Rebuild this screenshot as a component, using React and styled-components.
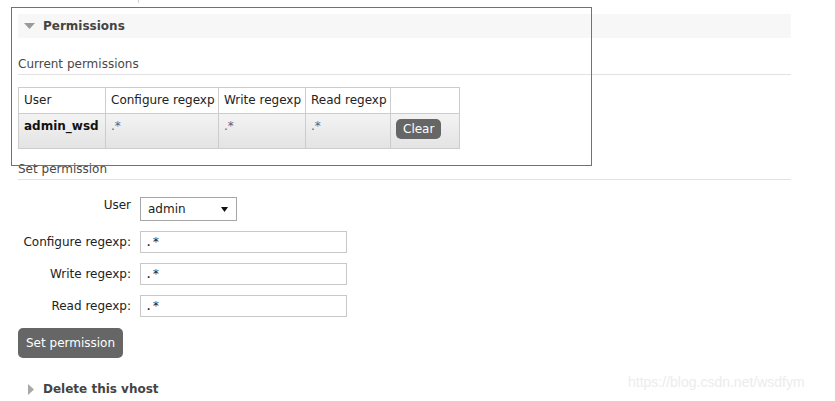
import styled, { createGlobalStyle } from 'styled-components'

const GlobalStyle = createGlobalStyle`
  body {
    margin: 0;
    background: #fff;
    font-family: "DejaVu Sans", Verdana, sans-serif;
    font-size: 12px;
    color: #333;
  }
`;

const Page = styled.div`
  position: relative;
  width: 773px;
  height: 401px;
  overflow: hidden;
  padding: 0 44px 0 18px;
`;

const TopTick = styled.div`
  margin-left: 120px;
  width: 1px;
  height: 3px;
  background: #d0d0d0;
`;

const SectionHeader = styled.div`
  display: flex;
  align-items: center;
  gap: ${p => (p.$open ? '8px' : '9px')};
  height: 24px;
  margin-top: ${p => p.$top || 0}px;
  padding-left: ${p => (p.$open ? '6px' : '10px')};
  background: ${p => (p.$open ? '#f7f7f7' : 'transparent')};
  font-weight: bold;
  line-height: 15px;
  color: #444;
`;

const SubTitle = styled.h3`
  margin: ${p => p.$top}px 0 0;
  padding-top: 1px;
  padding-bottom: 2px;
  border-bottom: 1px solid #e2e2e2;
  font-size: 12px;
  font-weight: normal;
  line-height: 15px;
  color: #484848;
`;

const Table = styled.table`
  width: 442px;
  margin-top: 12px;
  border-collapse: collapse;
  table-layout: fixed;
  line-height: 15px;

  th, td {
    border: 1px solid #cccccc;
    padding: 5px;
    text-align: left;
    vertical-align: top;
    white-space: nowrap;
  }

  tbody tr {
    background: linear-gradient(#f3f3f3, #e3e3e3);
  }
`;

const Head = styled.th`
  width: ${p => p.$w}px;
  font-weight: normal;
  color: #222;
  background: #fff;
`;

const UserCell = styled.td`
  font-weight: bold;
  color: #111;
`;

const Regexp = styled.td`
  color: #56627e;
`;

const SmallButton = styled.button`
  display: block;
  height: 20px;
  margin-bottom: 4px;
  padding: 0 7px;
  border: none;
  border-radius: 5px;
  background: #666;
  color: #fff;
  font-family: inherit;
  font-size: 12px;
  line-height: 20px;
`;

const Form = styled.div`
  display: grid;
  grid-template-columns: 122px auto;
  row-gap: 10px;
  margin-top: 17px;
  justify-items: start;
`;

const Label = styled.label`
  justify-self: end;
  padding: ${p => p.$offset}px 9px 0 0;
  line-height: 15px;
  color: #222;
`;

const FakeSelect = styled.div`
  display: flex;
  align-items: center;
  justify-content: space-between;
  box-sizing: border-box;
  width: 97px;
  height: 24px;
  padding: 0 8px 0 7px;
  border: 1px solid #a6a6a6;
  background: #fff;
  color: #222;
  line-height: 15px;
`;

const TextInput = styled.input`
  box-sizing: border-box;
  width: 207px;
  height: 22px;
  margin: 0;
  padding: 0 4px;
  border: 1px solid #c8c8c8;
  font-family: "DejaVu Sans Mono", "Liberation Mono", monospace;
  font-size: 12px;
  color: #222;
  outline: none;
`;

const BigButton = styled.button`
  display: block;
  height: 30px;
  margin-top: 11px;
  padding: 0 8px;
  border: none;
  border-radius: 5px;
  background: #666;
  color: #fff;
  font-family: inherit;
  font-size: 12px;
`;

const Annotation = styled.div`
  position: absolute;
  left: 11px;
  top: 7px;
  width: 579px;
  height: 157px;
  border: 1px solid #e2433f;
  pointer-events: none;
`;

const Watermark = styled.div`
  position: absolute;
  left: 628px;
  top: 374px;
  font-family: "Liberation Sans", Arial, sans-serif;
  font-size: 14px;
  color: #ececec;
  white-space: nowrap;
`;

function Triangle({ open }) {
  return open ? (
    <svg width="11" height="6" viewBox="0 0 11 6">
      <path d="M0 0 H11 L5.5 6 Z" fill="#9a9a9a" />
    </svg>
  ) : (
    <svg width="6" height="11" viewBox="0 0 6 11">
      <path d="M0 0 L6 5.5 L0 11 Z" fill="#a8a8a8" />
    </svg>
  )
}

const columns = [
  { title: 'User', w: 76 },
  { title: 'Configure regexp', w: 102 },
  { title: 'Write regexp', w: 76 },
  { title: 'Read regexp', w: 74 },
  { title: '', w: 58 },
]

const fields = [
  { label: 'Configure regexp:', value: '.*' },
  { label: 'Write regexp:', value: '.*' },
  { label: 'Read regexp:', value: '.*' },
]

export default function App() {
  return (
    <>
      <GlobalStyle />
      <Page>
        <TopTick />
        <SectionHeader $open $top={11}>
          <Triangle open />
          Permissions
        </SectionHeader>

        <SubTitle $top={18}>Current permissions</SubTitle>
        <Table>
          <thead>
            <tr>
              {columns.map(c => (
                <Head key={c.title} $w={c.w}>{c.title}</Head>
              ))}
            </tr>
          </thead>
          <tbody>
            <tr>
              <UserCell>admin_wsd</UserCell>
              <Regexp>.*</Regexp>
              <Regexp>.*</Regexp>
              <Regexp>.*</Regexp>
              <td><SmallButton>Clear</SmallButton></td>
            </tr>
          </tbody>
        </Table>

        <SubTitle $top={12}>Set permission</SubTitle>
        <Form>
          <Label $offset={1}>User</Label>
          <FakeSelect>
            admin
            <svg width="7" height="5" viewBox="0 0 7 5">
              <path d="M0 0 H7 L3.5 5 Z" fill="#111" />
            </svg>
          </FakeSelect>
          {fields.map(f => [
            <Label key={f.label + '-l'} $offset={4}>{f.label}</Label>,
            <TextInput key={f.label} defaultValue={f.value} />,
          ])}
        </Form>
        <BigButton>Set permission</BigButton>

        <SectionHeader $top={19}>
          <Triangle />
          Delete this vhost
        </SectionHeader>

        <Annotation />
        <Watermark>https://blog.csdn.net/wsdfym</Watermark>
      </Page>
    </>
  )
}
